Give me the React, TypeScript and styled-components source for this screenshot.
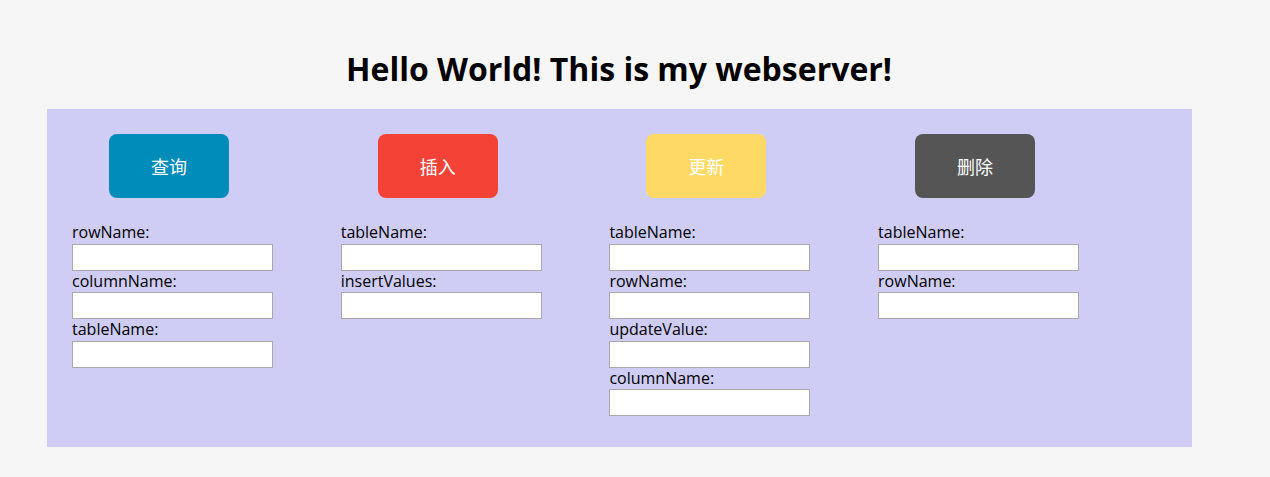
import React from 'react';
import styled, { createGlobalStyle } from 'styled-components';

const GlobalStyle = createGlobalStyle`
  body {
    margin: 0;
    background: #f6f6f6;
    font-family: "Open Sans", "Noto Sans CJK SC", sans-serif;
    color: #000;
  }
`;

const Title = styled.h1`
  margin: 44px 0 16px;
  text-align: center;
  font-size: 32px;
  font-weight: 700;
  line-height: 49px;
  width: 1238px;
`;

const Panel = styled.section`
  margin-left: 47px;
  width: 1145px;
  box-sizing: border-box;
  padding: 25px 0 31px 25px;
  background: #cfcdf5;
  display: grid;
  grid-template-columns: repeat(4, 268.7px);
`;

const Column = styled.div`
  display: flex;
  flex-direction: column;
`;

const ActionButton = styled.button<{ $bg: string }>`
  margin-left: 37px;
  width: 120px;
  height: 64px;
  border: none;
  border-radius: 8px;
  background: ${p => p.$bg};
  color: #fff;
  font-family: "Noto Sans CJK SC", sans-serif;
  font-size: 18px;
  cursor: pointer;
`;

const Form = styled.div`
  margin-top: 24px;
  display: flex;
  flex-direction: column;
`;

const Label = styled.label`
  display: block;
  font-size: 16px;
  line-height: 21.5px;
  height: 21.5px;
`;

const Input = styled.input`
  box-sizing: border-box;
  width: 201px;
  height: 27px;
  margin: 0;
  border: 1px solid #a9a9a9;
  background: #fff;
  padding: 0 4px;
`;

type Op = { label: string; color: string; fields: string[] };

const ops: Op[] = [
  { label: '查询', color: '#008cba', fields: ['rowName', 'columnName', 'tableName'] },
  { label: '插入', color: '#f44336', fields: ['tableName', 'insertValues'] },
  { label: '更新', color: '#ffd966', fields: ['tableName', 'rowName', 'updateValue', 'columnName'] },
  { label: '删除', color: '#555555', fields: ['tableName', 'rowName'] },
];

export default function App() {
  return (
    <>
      <GlobalStyle />
      <Title>Hello World! This is my webserver!</Title>
      <Panel>
        {ops.map(op => (
          <Column key={op.label}>
            <ActionButton $bg={op.color}>{op.label}</ActionButton>
            <Form>
              {op.fields.map(f => (
                <React.Fragment key={f}>
                  <Label>{f}:</Label>
                  <Input type="text" />
                </React.Fragment>
              ))}
            </Form>
          </Column>
        ))}
      </Panel>
    </>
  );
}
